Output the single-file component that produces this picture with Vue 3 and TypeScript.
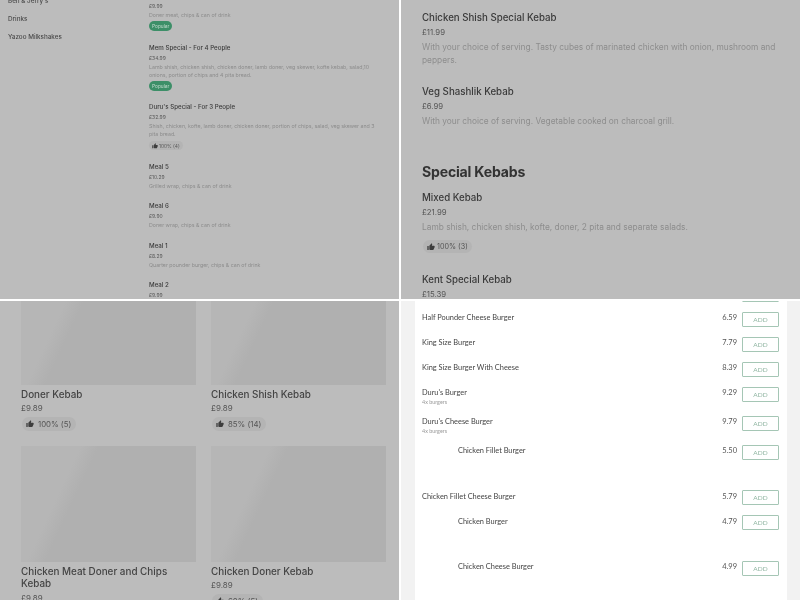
<script setup lang="ts">
interface Meal { name: string; price: string; desc?: string; popular?: boolean; rating?: string }
const meals: Meal[] = [
  { name: 'Mem Special - For 4 People', price: '£34.99', desc: 'Lamb shish, chicken shish, chicken doner, lamb doner, veg skewer, kofte kebab, salad,10 onions, portion of chips and 4 pita bread.', popular: true },
  { name: "Duru's Special - For 3 People", price: '£32.99', desc: 'Shish, chicken, kofte, lamb doner, chicken doner, portion of chips, salad, veg skewer and 3 pita bread.', rating: '100% (4)' },
  { name: 'Meal 5', price: '£10.29', desc: 'Grilled wrap, chips & can of drink' },
  { name: 'Meal 6', price: '£9.90', desc: 'Doner wrap, chips & can of drink' },
  { name: 'Meal 1', price: '£8.29', desc: 'Quarter pounder burger, chips & can of drink' },
  { name: 'Meal 2', price: '£9.99' },
]
const rows = [
  { name: '', price: '', h: 'r25' },
  { name: 'Half Pounder Cheese Burger', price: '6.59', h: 'r25' },
  { name: 'King Size Burger', price: '7.79', h: 'r25' },
  { name: 'King Size Burger With Cheese', price: '8.39', h: 'r25' },
  { name: "Duru's Burger", sub: '4x burgers', price: '9.29', h: 'r29' },
  { name: "Duru's Cheese Burger", sub: '4x burgers', price: '9.79', h: 'r29' },
  { name: 'Chicken Fillet Burger', price: '5.50', h: 'r45', indent: true },
  { name: 'Chicken Fillet Cheese Burger', price: '5.79', h: 'r25' },
  { name: 'Chicken Burger', price: '4.79', h: 'r45', indent: true },
  { name: 'Chicken Cheese Burger', price: '4.99', h: 'r45', indent: true },
]
const cards = [
  { name: 'Doner Kebab', rating: '100% (5)' },
  { name: 'Chicken Shish Kebab', rating: '85% (14)' },
  { name: 'Chicken Meat Doner and Chips Kebab', rating: '80% (5)' },
  { name: 'Chicken Doner Kebab', rating: '60% (5)' },
]
const thumb = 'M1 21h4V9H1v12zm22-11c0-1.1-.9-2-2-2h-6.31l.95-4.57.03-.32c0-.41-.17-.79-.44-1.06L14.17 1 7.59 7.59C7.22 7.95 7 8.45 7 9v10c0 1.1.9 2 2 2h9c.83 0 1.54-.5 1.84-1.22l3.02-7.05c.09-.23.14-.47.14-.73v-2z'
</script>

<template>
  <div class="grid">
    <section class="pane tl">
      <nav class="side">
        <a>Ben &amp; Jerry's</a>
        <a>Drinks</a>
        <a>Yazoo Milkshakes</a>
      </nav>
      <div class="meals">
        <div class="meal first">
          <p class="m-price">£9.99</p>
          <p class="m-desc">Doner meat, chips &amp; can of drink</p>
          <span class="pop">Popular</span>
        </div>
        <div v-for="m in meals" :key="m.name" class="meal">
          <h4>{{ m.name }}</h4>
          <p class="m-price">{{ m.price }}</p>
          <p v-if="m.desc" class="m-desc">{{ m.desc }}</p>
          <span v-if="m.popular" class="pop">Popular</span>
          <span v-if="m.rating" class="m-rate">
            <svg viewBox="0 0 24 24" width="6" height="6"><path :d="thumb" /></svg>{{ m.rating }}
          </span>
        </div>
      </div>
    </section>

    <section class="pane tr">
      <div class="dish">
        <h4>Chicken Shish Special Kebab</h4>
        <p class="d-price">£11.99</p>
        <p class="d-desc">With your choice of serving. Tasty cubes of marinated chicken with onion, mushroom and peppers.</p>
      </div>
      <div class="dish">
        <h4>Veg Shashlik Kebab</h4>
        <p class="d-price">£6.99</p>
        <p class="d-desc">With your choice of serving. Vegetable cooked on charcoal grill.</p>
      </div>
      <h2>Special Kebabs</h2>
      <div class="dish rated">
        <h4>Mixed Kebab</h4>
        <p class="d-price">£21.99</p>
        <p class="d-desc">Lamb shish, chicken shish, kofte, doner, 2 pita and separate salads.</p>
        <span class="d-rate">
          <svg viewBox="0 0 24 24" width="8" height="8"><path :d="thumb" /></svg>100% (3)
        </span>
      </div>
      <div class="dish">
        <h4>Kent Special Kebab</h4>
        <p class="d-price">£15.39</p>
      </div>
    </section>

    <section class="pane bl">
      <div class="cards">
        <article v-for="c in cards" :key="c.name" class="card">
          <div class="ph"></div>
          <h4>{{ c.name }}</h4>
          <p class="c-price">£9.89</p>
          <span class="c-rate">
            <svg viewBox="0 0 24 24" width="8" height="8"><path :d="thumb" /></svg>{{ c.rating }}
          </span>
        </article>
      </div>
    </section>

    <section class="pane br">
      <div class="sheet">
        <div v-for="(r, i) in rows" :key="i" class="row" :class="[r.h, { indent: r.indent }]">
          <div class="r-name">
            <div>{{ r.name }}</div>
            <div v-if="r.sub" class="r-sub">{{ r.sub }}</div>
          </div>
          <span class="r-price">{{ r.price }}</span>
          <button class="add">ADD</button>
        </div>
      </div>
    </section>
  </div>
</template>

<style>
html, body { margin: 0; background: #fff; }
</style>

<style scoped>
.grid {
  width: 800px;
  height: 600px;
  display: grid;
  grid-template-columns: 399px 399px;
  grid-template-rows: 299px 299px;
  gap: 2px;
  background: #fff;
  overflow: hidden;
  filter: blur(.3px);
}
.pane { overflow: hidden; background: #bcbcbc; }
h2, h4, p { margin: 0; }

/* top left */
.tl { display: flex; font-family: Inter, sans-serif; }
.side {
  width: 149px;
  flex: none;
  box-sizing: border-box;
  padding-left: 8px;
  margin-top: -3.5px;
  display: flex;
  flex-direction: column;
  gap: 8.5px;
  font-size: 6.3px;
  font-weight: 500;
  line-height: 9.5px;
  color: #4a4a4a;
}
.meals { width: 226px; margin-top: 1px; }
.meal { margin-bottom: 11.5px; }
.meal.first { margin-bottom: 11.5px; }
.meal h4 { font-size: 6.2px; line-height: 10px; font-weight: 500; color: #3d3d3d; }
.m-price { font-size: 5px; line-height: 10px; color: #5a5a5a; }
.m-desc { font-size: 5.28px; line-height: 8px; color: #8c8c8c; }
.pop {
  display: block;
  width: fit-content;
  box-sizing: border-box;
  height: 10px;
  margin-top: 2px;
  padding: 0 3px;
  border-radius: 5px;
  background: #3d8f68;
  color: #c6dccf;
  font-size: 4.8px;
  line-height: 10px;
}
.m-rate {
  display: flex;
  align-items: center;
  gap: 1px;
  width: fit-content;
  height: 9px;
  margin-top: 3px;
  padding: 0 3px;
  border-radius: 5px;
  background: #b4b4b4;
  color: #555;
  font-size: 4.8px;
}
.m-rate svg, .d-rate svg, .c-rate svg { fill: #3d3d3d; flex: none; }

/* top right */
.tr { padding: 9.5px 0 0 21px; font-family: Inter, sans-serif; }
.dish { width: 362px; margin-bottom: 17px; }
.dish.rated { margin-bottom: 18.5px; }
.dish h4 { font-size: 9.7px; line-height: 15px; font-weight: 500; color: #3a3a3a; }
.d-price { font-size: 7.8px; line-height: 15px; color: #555; }
.d-desc { font-size: 8.35px; line-height: 13px; margin-top: 1px; color: #8d8d8d; }
.tr h2 {
  font-size: 14.1px;
  line-height: 20px;
  margin: 34.5px 0 8px;
  font-weight: 700;
  color: #333;
  letter-spacing: -.2px;
}
.d-rate {
  display: flex;
  align-items: center;
  gap: 2px;
  width: fit-content;
  height: 13px;
  margin: 6px 0 0 1px;
  padding: 0 4px;
  border-radius: 7px;
  background: #b4b4b4;
  color: #555;
  font-size: 7.2px;
}

/* bottom left */
.bl { font-family: Inter, sans-serif; }
.cards {
  width: 365px;
  margin: -32px 0 0 21px;
  display: grid;
  grid-template-columns: 175px 175px;
  column-gap: 15px;
  row-gap: 15px;
}
.ph {
  height: 116px;
  background: linear-gradient(115deg, #b6b6b6 26%, #b0b0b0 34%);
}
.card h4 { font-size: 9.9px; line-height: 12.5px; margin-top: 2.5px; font-weight: 500; color: #444; }
.c-price { font-size: 8px; line-height: 14px; margin-top: 1px; color: #555; }
.c-rate {
  display: flex;
  align-items: center;
  gap: 4px;
  width: fit-content;
  height: 14.5px;
  margin: 1.5px 0 0 1px;
  padding: 0 5px 0 4px;
  border-radius: 8px;
  background: #b4b4b4;
  color: #555;
  font-size: 7.8px;
}

/* bottom right */
.br { background: #f2f2f2; padding: 0 13px 0 14px; }
.sheet {
  min-height: 340px;
  background: #fff;
  box-sizing: border-box;
  padding: 0 8px 0 7px;
  margin-top: -23.5px;
  font-family: Lato, sans-serif;
}
.row { display: flex; align-items: flex-start; box-sizing: border-box; padding-top: 9px; }
.r25 { height: 25px; }
.r29 { height: 29px; }
.r45 { height: 45.5px; }
.indent .r-name { padding-left: 36px; }
.r-name { flex: 1; font-size: 7.4px; line-height: 12px; color: #444; margin-top: .5px; }
.r-sub { font-size: 5.4px; line-height: 6px; color: #999; }
.r-price { font-size: 7.5px; line-height: 12px; color: #555; margin: .5px 5px 0 0; }
.add {
  width: 37px;
  height: 15px;
  box-sizing: border-box;
  padding: 0;
  border: 1px solid #a5c6b5;
  border-radius: 1px;
  background: #fff;
  color: #8fb5a1;
  font-family: Lato, sans-serif;
  font-size: 6.5px;
  line-height: 13px;
}
</style>
